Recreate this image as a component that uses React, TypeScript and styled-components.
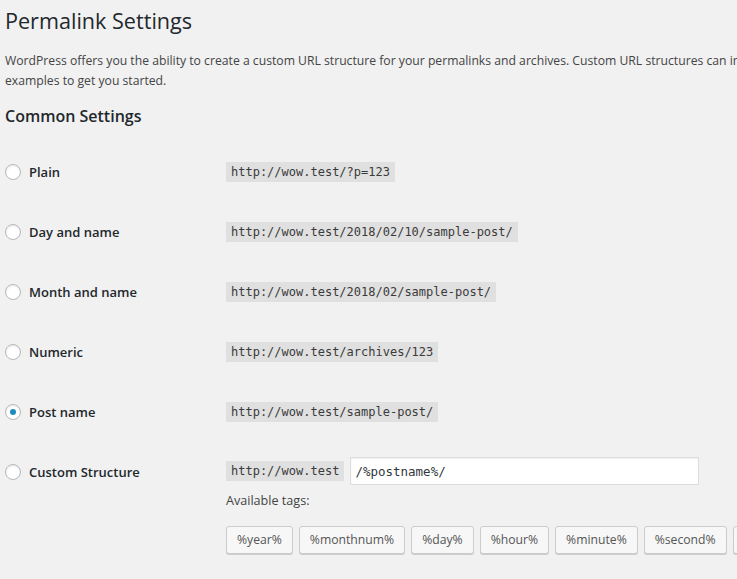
import React from 'react';
import styled, { createGlobalStyle } from 'styled-components';

const GlobalStyle = createGlobalStyle`
  html, body {
    margin: 0;
    padding: 0;
    background: #f1f1f1;
    overflow: hidden;
  }
  body {
    font-family: "Open Sans", "Noto Sans", sans-serif;
    color: #444;
    font-size: 12.2px;
  }
`;

const Wrap = styled.div`
  width: 1100px;
  padding: 0 0 0 5px;
`;

const Title = styled.h1`
  margin: 0;
  padding: 6px 0 0;
  font-size: 21.6px;
  font-weight: 400;
  line-height: 30px;
  color: #23282d;
`;

const Description = styled.p`
  margin: 15px 0 0;
  font-size: 12.2px;
  line-height: 19.5px;
  color: #444;
`;

const DescLine = styled.span`
  display: block;
  white-space: nowrap;
`;

const SectionTitle = styled.h2`
  margin: 15px 0 15px;
  font-size: 16px;
  font-weight: 600;
  line-height: 22px;
  color: #23282d;
`;

const Table = styled.div`
  display: flex;
  flex-direction: column;
`;

const Row = styled.div`
  display: grid;
  grid-template-columns: 221px 1fr;
  min-height: 60px;
`;

const Th = styled.label`
  display: flex;
  align-items: center;
  gap: 8px;
  padding: 20px 0;
  height: 20px;
  font-size: 13px;
  font-weight: 600;
  color: #23282d;
`;

const Radio = styled.span<{ $checked?: boolean }>`
  position: relative;
  flex: none;
  width: 14px;
  height: 14px;
  border: 1px solid #b4b9be;
  border-radius: 50%;
  background: #fff;
  box-shadow: inset 0 1px 2px rgba(0, 0, 0, 0.1);

  &::before {
    content: '';
    display: ${p => (p.$checked ? 'block' : 'none')};
    position: absolute;
    left: 4px;
    top: 4px;
    width: 6px;
    height: 6px;
    border-radius: 50%;
    background: #1e8cbe;
  }
`;

const Td = styled.div<{ $top?: number }>`
  padding: ${p => p.$top ?? 20}px 0 20px;
`;

const Code = styled.code`
  display: inline-block;
  padding: 3px 5px 2px;
  font-family: "DejaVu Sans Mono", "Liberation Mono", monospace;
  font-size: 12px;
  line-height: 15px;
  color: #3a3a3a;
  background: rgba(0, 0, 0, 0.07);
`;

const Line = styled.div`
  display: flex;
  align-items: center;
  gap: 6px;
  height: 28px;
`;

const Input = styled.input`
  box-sizing: border-box;
  width: 349px;
  height: 28px;
  margin: 0;
  padding: 0 4px;
  border: 1px solid #ddd;
  background: #fff;
  box-shadow: inset 0 1px 2px rgba(0, 0, 0, 0.07);
  font-family: "DejaVu Sans Mono", "Liberation Mono", monospace;
  font-size: 12.5px;
  color: #32373c;
  outline: none;
`;

const TagsLabel = styled.div`
  margin-top: 7px;
  font-size: 12.6px;
  line-height: 18px;
  color: #444;
`;

const Tags = styled.div`
  display: flex;
  gap: 6px;
  margin-top: 16px;
`;

const TagButton = styled.button`
  box-sizing: border-box;
  flex: none;
  height: 28px;
  margin: 0;
  padding: 0 10px;
  line-height: 26px;
  font-family: inherit;
  font-size: 12.2px;
  color: #555;
  background: #f7f7f7;
  border: 1px solid #ccc;
  border-radius: 3px;
  box-shadow: 0 1px 0 #ccc;
`;

const options = [
  { label: 'Plain', url: 'http://wow.test/?p=123' },
  { label: 'Day and name', url: 'http://wow.test/2018/02/10/sample-post/' },
  { label: 'Month and name', url: 'http://wow.test/2018/02/sample-post/' },
  { label: 'Numeric', url: 'http://wow.test/archives/123' },
  { label: 'Post name', url: 'http://wow.test/sample-post/', checked: true },
];

const tags = ['%year%', '%monthnum%', '%day%', '%hour%', '%minute%', '%second%', '%post_id%', '%postname%'];

export default function App() {
  return (
    <Wrap>
      <GlobalStyle />
      <Title>Permalink Settings</Title>
      <Description>
        <DescLine>
          WordPress offers you the ability to create a custom URL structure for your permalinks and archives. Custom URL structures can improve the aesthetics, usability, and forward-compatibility of your links. A number of tags are available, and here are some
        </DescLine>
        <DescLine>examples to get you started.</DescLine>
      </Description>
      <SectionTitle>Common Settings</SectionTitle>
      <Table>
        {options.map(o => (
          <Row key={o.label}>
            <Th>
              <Radio $checked={o.checked} />
              {o.label}
            </Th>
            <Td>
              <Code>{o.url}</Code>
            </Td>
          </Row>
        ))}
        <Row>
          <Th>
            <Radio />
            Custom Structure
          </Th>
          <Td $top={15}>
            <Line>
              <Code>http://wow.test</Code>
              <Input defaultValue="/%postname%/" />
            </Line>
            <TagsLabel>Available tags:</TagsLabel>
            <Tags>
              {tags.map(t => (
                <TagButton key={t}>{t}</TagButton>
              ))}
            </Tags>
          </Td>
        </Row>
      </Table>
    </Wrap>
  );
}
